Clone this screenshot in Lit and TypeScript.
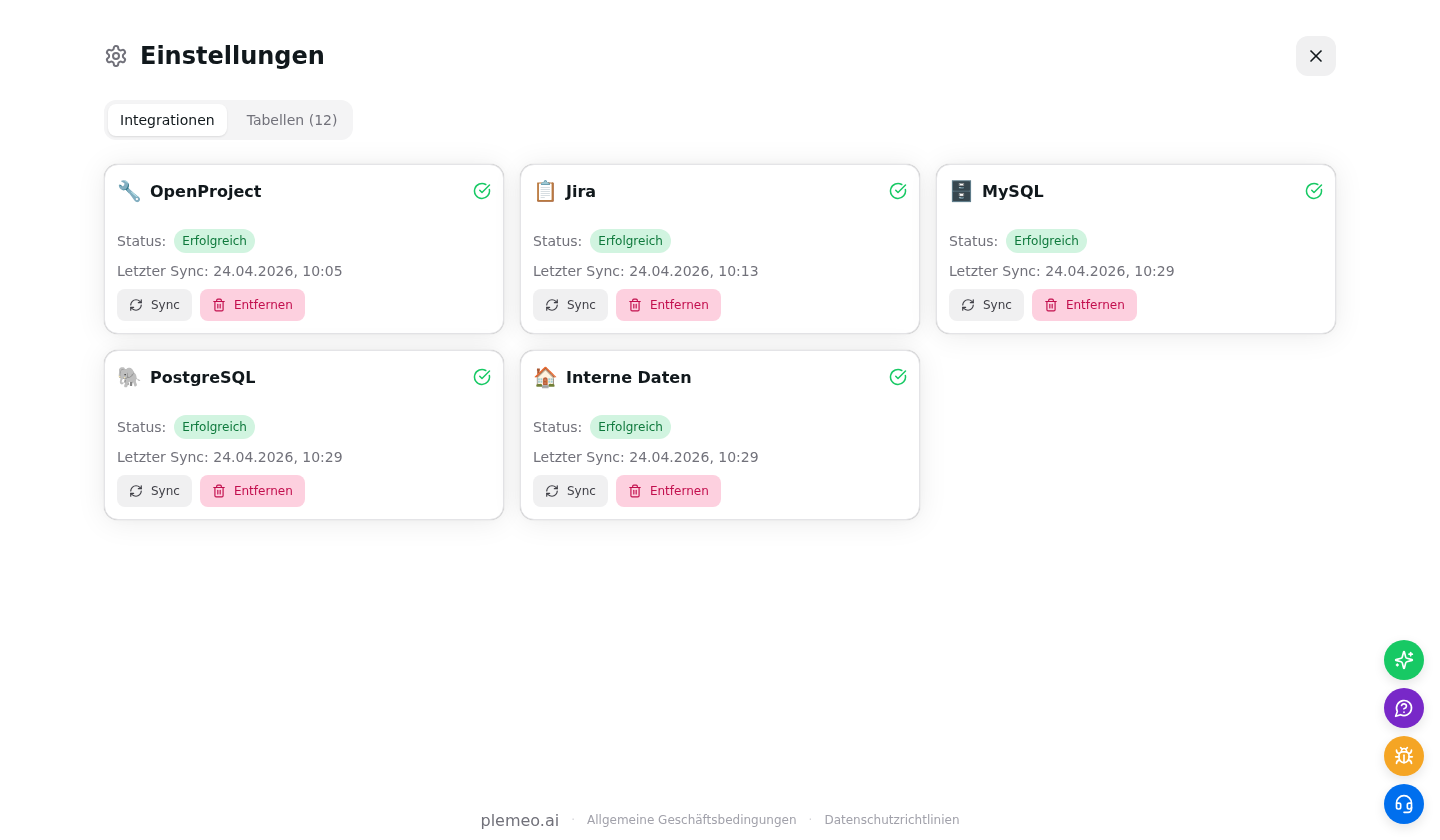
import { LitElement, html, css, svg } from "lit";
import { customElement } from "lit/decorators.js";

const cards = [
  { e: "🔧", n: "OpenProject", t: "24.04.2026, 10:05" },
  { e: "📋", n: "Jira", t: "24.04.2026, 10:13" },
  { e: "🗄️", n: "MySQL", t: "24.04.2026, 10:29" },
  { e: "🐘", n: "PostgreSQL", t: "24.04.2026, 10:29" },
  { e: "🏠", n: "Interne Daten", t: "24.04.2026, 10:29" },
];

const ic = (size: number, content: unknown, sw = 2) => html`<svg width=${size} height=${size} viewBox="0 0 24 24" fill="none" stroke="currentColor" stroke-width=${sw} stroke-linecap="round" stroke-linejoin="round">${content}</svg>`;

const gear = svg`<path d="M12.22 2h-.44a2 2 0 0 0-2 2v.18a2 2 0 0 1-1 1.73l-.43.25a2 2 0 0 1-2 0l-.15-.08a2 2 0 0 0-2.73.73l-.22.38a2 2 0 0 0 .73 2.73l.15.1a2 2 0 0 1 1 1.72v.51a2 2 0 0 1-1 1.74l-.15.09a2 2 0 0 0-.73 2.73l.22.38a2 2 0 0 0 2.73.73l.15-.08a2 2 0 0 1 2 0l.43.25a2 2 0 0 1 1 1.73V20a2 2 0 0 0 2 2h.44a2 2 0 0 0 2-2v-.18a2 2 0 0 1 1-1.73l.43-.25a2 2 0 0 1 2 0l.15.08a2 2 0 0 0 2.73-.73l.22-.39a2 2 0 0 0-.73-2.73l-.15-.08a2 2 0 0 1-1-1.74v-.5a2 2 0 0 1 1-1.74l.15-.09a2 2 0 0 0 .73-2.73l-.22-.38a2 2 0 0 0-2.73-.73l-.15.08a2 2 0 0 1-2 0l-.43-.25a2 2 0 0 1-1-1.73V4a2 2 0 0 0-2-2z"/><circle cx="12" cy="12" r="3"/>`;
const close = svg`<path d="M18 6 6 18"/><path d="m6 6 12 12"/>`;
const check = svg`<path d="M21.8 10A10 10 0 1 1 17 3.34"/><path d="m9 11 3 3L22 4"/>`;
const sync = svg`<path d="M3 12a9 9 0 0 1 9-9 9.75 9.75 0 0 1 6.74 2.74L21 8"/><path d="M21 3v5h-5"/><path d="M21 12a9 9 0 0 1-9 9 9.75 9.75 0 0 1-6.74-2.74L3 16"/><path d="M8 16H3v5"/>`;
const trash = svg`<path d="M3 6h18"/><path d="M19 6v14c0 1-1 2-2 2H7c-1 0-2-1-2-2V6"/><path d="M8 6V4c0-1 1-2 2-2h4c1 0 2 1 2 2v2"/><line x1="10" x2="10" y1="11" y2="17"/><line x1="14" x2="14" y1="11" y2="17"/>`;
const sparkles = svg`<path d="M9.937 15.5A2 2 0 0 0 8.5 14.063l-6.135-1.582a.5.5 0 0 1 0-.962L8.5 9.936A2 2 0 0 0 9.937 8.5l1.582-6.135a.5.5 0 0 1 .963 0L14.063 8.5A2 2 0 0 0 15.5 9.937l6.135 1.581a.5.5 0 0 1 0 .964L15.5 14.063a2 2 0 0 0-1.437 1.437l-1.582 6.135a.5.5 0 0 1-.963 0z"/><path d="M20 3v4"/><path d="M22 5h-4"/><path d="M4 17v2"/><path d="M5 18H3"/>`;
const help = svg`<path d="M7.9 20A9 9 0 1 0 4 16.1L2 22Z"/><path d="M9.09 9a3 3 0 0 1 5.83 1c0 2-3 3-3 3"/><path d="M12 17h.01"/>`;
const bug = svg`<path d="m8 2 1.88 1.88"/><path d="M14.12 3.88 16 2"/><path d="M9 7.13v-1a3.003 3.003 0 1 1 6 0v1"/><path d="M12 20c-3.3 0-6-2.7-6-6v-3a4 4 0 0 1 4-4h4a4 4 0 0 1 4 4v3c0 3.3-2.7 6-6 6"/><path d="M12 20v-9"/><path d="M6.53 9C4.6 8.8 3 7.1 3 5"/><path d="M6 13H2"/><path d="M3 21c0-2.1 1.7-3.9 3.8-4"/><path d="M20.97 5c0 2.1-1.6 3.8-3.5 4"/><path d="M22 13h-4"/><path d="M17.2 17c2.1.1 3.8 1.9 3.8 4"/>`;
const headset = svg`<path d="M3 11h3a2 2 0 0 1 2 2v3a2 2 0 0 1-2 2H5a2 2 0 0 1-2-2v-5Zm0 0a9 9 0 1 1 18 0m0 0v5a2 2 0 0 1-2 2h-1a2 2 0 0 1-2-2v-3a2 2 0 0 1 2-2h3Z"/><path d="M21 16v2a4 4 0 0 1-4 4h-5"/>`;

@customElement("app-root")
export class AppRoot extends LitElement {
  static styles = css`
    :host {
      display: block;
      height: 840px;
      position: relative;
      overflow: hidden;
      background: #fff;
      font-family: "DejaVu Sans", sans-serif;
      color: #11181c;
    }
    .page {
      height: 100%;
      box-sizing: border-box;
      padding: 36px 104px 0;
      display: flex;
      flex-direction: column;
      will-change: transform;
    }
    .head {
      display: flex;
      align-items: center;
      justify-content: space-between;
      height: 40px;
    }
    .title {
      display: flex;
      align-items: center;
      gap: 12px;
    }
    .gear {
      display: flex;
      color: #71717a;
    }
    h1 {
      margin: 0;
      font-size: 24px;
      line-height: 32px;
      font-weight: 700;
    }
    .x {
      width: 40px;
      height: 40px;
      border-radius: 12px;
      background: #f0f0f1;
      display: flex;
      align-items: center;
      justify-content: center;
      color: #11181c;
    }
    .tabs {
      align-self: flex-start;
      margin-top: 24px;
      height: 40px;
      box-sizing: border-box;
      padding: 4px;
      border-radius: 12px;
      background: #f4f4f5;
      display: flex;
      font-size: 14px;
      line-height: 20px;
    }
    .tab {
      height: 32px;
      padding: 0 12px;
      display: flex;
      align-items: center;
      border-radius: 8px;
      color: #71717a;
    }
    .tab.on {
      background: #fff;
      color: #11181c;
      box-shadow: 0 1px 2px rgba(0, 0, 0, 0.1);
    }
    .tab + .tab {
      margin-left: 8px;
    }
    .grid {
      margin-top: 24px;
      display: grid;
      grid-template-columns: repeat(3, 400px);
      grid-auto-rows: 170px;
      gap: 16px;
    }
    .card {
      box-sizing: border-box;
      border: 1px solid #e4e4e7;
      border-radius: 14px;
      background: #fff;
      box-shadow: 0 0 15px rgba(0, 0, 0, 0.03), 0 2px 30px rgba(0, 0, 0, 0.08), 0 0 1px rgba(0, 0, 0, 0.3);
      padding: 12px;
      display: flex;
      flex-direction: column;
    }
    .top {
      display: flex;
      align-items: center;
      justify-content: space-between;
      height: 28px;
    }
    .name {
      display: flex;
      align-items: center;
      gap: 8px;
      font-size: 16px;
      font-weight: 700;
    }
    .emoji {
      font-size: 20px;
      line-height: 28px;
      width: 25px;
      font-family: "Noto Color Emoji", sans-serif;
      font-weight: 400;
    }
    .ok {
      display: flex;
      color: #17c964;
    }
    .status {
      margin-top: 24px;
      display: flex;
      align-items: center;
      gap: 8px;
      height: 24px;
      font-size: 14px;
      color: #71717a;
    }
    .chip {
      height: 24px;
      padding: 0 8px;
      border-radius: 12px;
      background: #d1f4e0;
      color: #0e793c;
      font-size: 12px;
      line-height: 24px;
    }
    .sync-line {
      margin-top: 8px;
      font-size: 14px;
      line-height: 20px;
      color: #71717a;
    }
    .actions {
      margin-top: 8px;
      display: flex;
      gap: 8px;
    }
    .btn {
      height: 32px;
      padding: 0 12px;
      border-radius: 8px;
      display: flex;
      align-items: center;
      gap: 8px;
      font-size: 12px;
    }
    .btn.gray {
      background: #f0f0f1;
      color: #3f3f46;
    }
    .btn.red {
      background: #fdd0df;
      color: #c20e4d;
    }
    footer {
      position: absolute;
      left: 0;
      right: 0;
      bottom: 8px;
      display: flex;
      justify-content: center;
      align-items: center;
      height: 24px;
      gap: 12px;
      font-size: 12px;
      color: #a1a1aa;
      will-change: transform;
    }
    .brand {
      font-size: 16px;
      color: #71717a;
    }
    .dot {
      color: #d4d4d8;
    }
    .fabs {
      position: absolute;
      right: 16px;
      bottom: 16px;
      display: flex;
      flex-direction: column;
      gap: 8px;
    }
    .fab {
      width: 40px;
      height: 40px;
      border-radius: 50%;
      display: flex;
      align-items: center;
      justify-content: center;
      color: #fff;
      box-shadow: 0 4px 12px rgba(0, 0, 0, 0.1);
    }
    .g { background: #17c964; }
    .p { background: #7828c8; }
    .o { background: #f5a524; }
    .b { background: #006fee; }
  `;

  render() {
    return html`
      <div class="page">
        <div class="head">
          <div class="title">
            <span class="gear">${ic(24, gear, 2)}</span>
            <h1>Einstellungen</h1>
          </div>
          <div class="x">${ic(20, close)}</div>
        </div>
        <div class="tabs">
          <div class="tab on">Integrationen</div>
          <div class="tab">Tabellen (12)</div>
        </div>
        <div class="grid">
          ${cards.map(
            (c) => html`
              <div class="card">
                <div class="top">
                  <div class="name"><span class="emoji">${c.e}</span>${c.n}</div>
                  <span class="ok">${ic(18, check)}</span>
                </div>
                <div class="status">Status: <span class="chip">Erfolgreich</span></div>
                <div class="sync-line">Letzter Sync: ${c.t}</div>
                <div class="actions">
                  <div class="btn gray">${ic(14, sync)}Sync</div>
                  <div class="btn red">${ic(14, trash)}Entfernen</div>
                </div>
              </div>
            `
          )}
        </div>
      </div>
      <footer>
        <span class="brand">plemeo.ai</span><span class="dot">·</span>
        <span>Allgemeine Geschäftsbedingungen</span><span class="dot">·</span>
        <span>Datenschutzrichtlinien</span>
      </footer>
      <div class="fabs">
        <div class="fab g">${ic(20, sparkles)}</div>
        <div class="fab p">${ic(20, help)}</div>
        <div class="fab o">${ic(20, bug)}</div>
        <div class="fab b">${ic(20, headset)}</div>
      </div>
    `;
  }
}
